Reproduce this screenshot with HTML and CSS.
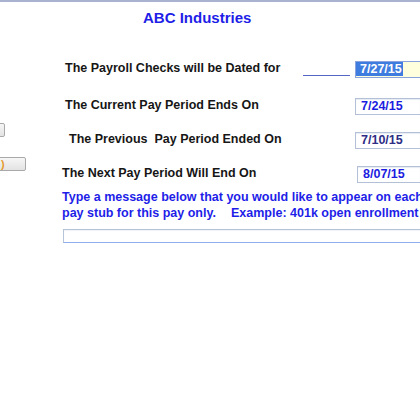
FILE: index.html
```html
<!DOCTYPE html>
<html>
<head>
<meta charset="utf-8">
<link rel="stylesheet" href="styles.css">
</head>
<body>
<div class="page">
  <h1 class="title">ABC Industries</h1>
  <div class="form">
    <div class="side">
      <button class="btn btn-a" type="button"></button>
      <button class="btn btn-b" type="button"><span class="paren">)</span></button>
    </div>
    <div class="main">
      <div class="row row-first">
        <div class="label label-a">The Payroll Checks will be Dated for<span class="blank"></span></div>
        <div class="field field-focus"><span class="sel">7/27/15</span></div>
      </div>
      <div class="row">
        <div class="label label-a">The Current Pay Period Ends On</div>
        <div class="field">7/24/15</div>
      </div>
      <div class="row">
        <div class="label label-b">The Previous &nbsp;Pay Period Ended On</div>
        <div class="field field-ro">7/10/15</div>
      </div>
      <div class="row row-last">
        <div class="label">The Next Pay Period Will End On</div>
        <div class="field field-shift">8/07/15</div>
      </div>
      <p class="note">Type a message below that you would like to appear on each<br>pay stub for this pay only.<span class="gap"></span>Example: 401k open enrollment</p>
      <input class="message" type="text" value="">
    </div>
  </div>
</div>
</body>
</html>
```

FILE: styles.css
```css
html, body {
  margin: 0;
  padding: 0;
  background: #ffffff;
  overflow: hidden;
}

.page {
  width: 420px;
  height: 420px;
  border-top: 2px solid #a9b3cf;
  box-sizing: border-box;
  font-family: "Liberation Sans", Arial, sans-serif;
  font-weight: bold;
  font-size: 12.5px;
  color: #161616;
  overflow: hidden;
}

.title {
  margin: 7px 0 0 143px;
  font-size: 15px;
  line-height: 18px;
  font-weight: bold;
  color: #1e1ee8;
  white-space: nowrap;
}

.form {
  display: grid;
  grid-template-columns: 62px 358px;
  margin-top: 34px;
}

.side {
  display: flex;
  flex-direction: column;
  align-items: flex-start;
  padding-top: 62px;
  gap: 20px;
  overflow: hidden;
}

.btn {
  display: block;
  height: 14px;
  width: 70px;
  padding: 0;
  border: 1px solid #a9a9a9;
  border-radius: 2px;
  background: linear-gradient(#f6f6f6, #e3e3e3);
  font-family: "Liberation Sans", Arial, sans-serif;
  text-align: right;
  position: relative;
}

.btn-a { margin-left: -65px; }
.btn-b { margin-left: -44px; }

.paren {
  position: absolute;
  left: 44px;
  top: -1px;
  font-size: 11px;
  line-height: 14px;
  color: #e59a2e;
  font-weight: bold;
}

.main {
  display: flex;
  flex-direction: column;
}

.row {
  display: grid;
  grid-template-columns: 293px 65px;
  align-items: start;
  height: 17px;
  margin-bottom: 17px;
}

.row-first { margin-bottom: 20px; }
.row-last { margin-bottom: 0; }

.label {
  display: flex;
  align-items: flex-start;
  line-height: 12px;
  padding-top: 1px;
  white-space: nowrap;
}

.label-a { padding-left: 3px; }
.label-b { padding-left: 7px; }

.blank {
  display: block;
  width: 47px;
  height: 13px;
  margin-left: auto;
  margin-right: 5px;
  border-bottom: 1px solid #5566c4;
}

.field {
  height: 17px;
  box-sizing: border-box;
  border: 1px solid #b3c0d8;
  border-right: none;
  padding-left: 5px;
  line-height: 15px;
  font-size: 12.5px;
  color: #1c1ce0;
  background: #ffffff;
  white-space: nowrap;
  box-shadow: inset 0 1px 1px #e6ebf3;
}

.field-focus {
  border-color: #8aa3dc;
  background: #ffffde;
  padding-left: 0;
  box-shadow: none;
}

.sel {
  display: inline-block;
  height: 14px;
  line-height: 15px;
  padding: 0 1px 0 4px;
  background: #3f7ce0;
  color: #ffffff;
  vertical-align: top;
}

.field-ro { color: #2e2e86; }

.field-shift { margin-left: 2px; }

.note {
  margin: 6px 0 0 0;
  line-height: 16px;
  color: #1e1ee8;
  white-space: nowrap;
}

.gap {
  display: inline-block;
  width: 15px;
}

.message {
  display: block;
  margin: 8px 0 0 1px;
  width: 400px;
  height: 14px;
  box-sizing: border-box;
  padding: 0;
  border: 1px solid #b7c3d8;
  border-bottom-color: #8fb0ee;
  background: #ffffff;
  box-shadow: inset 0 1px 1px #eef1f6;
  outline: none;
}
```
